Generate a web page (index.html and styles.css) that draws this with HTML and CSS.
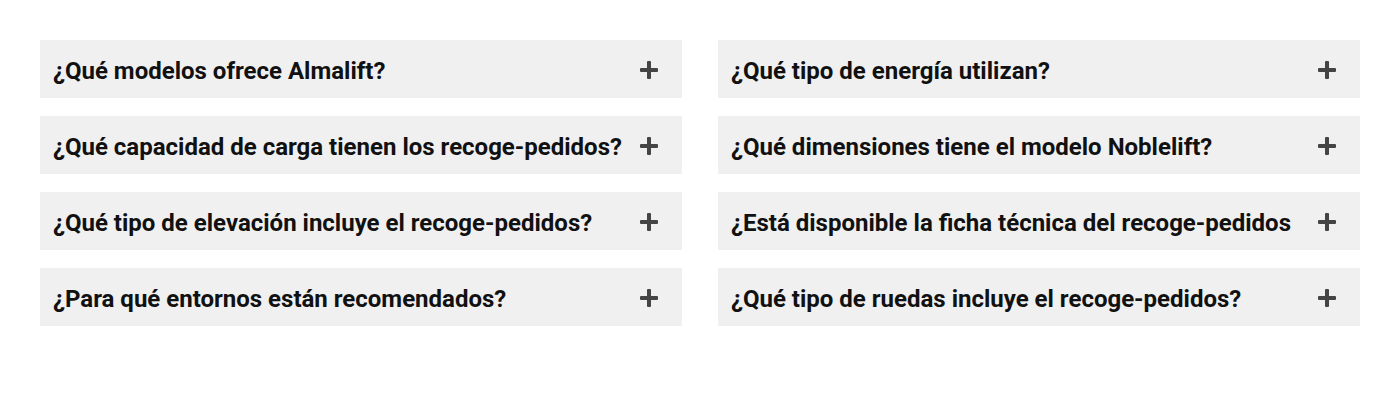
FILE: index.html
```html
<!DOCTYPE html>
<html lang="es">
<head>
<meta charset="utf-8">
<title>Preguntas frecuentes</title>
<link rel="stylesheet" href="styles.css">
</head>
<body>
<div class="faq">
  <div class="item"><span class="q">¿Qué modelos ofrece Almalift?</span><span class="plus"></span></div>
  <div class="item"><span class="q">¿Qué tipo de energía utilizan?</span><span class="plus"></span></div>
  <div class="item"><span class="q">¿Qué capacidad de carga tienen los recoge-pedidos?</span><span class="plus"></span></div>
  <div class="item"><span class="q">¿Qué dimensiones tiene el modelo Noblelift?</span><span class="plus"></span></div>
  <div class="item"><span class="q">¿Qué tipo de elevación incluye el recoge-pedidos?</span><span class="plus"></span></div>
  <div class="item"><span class="q">¿Está disponible la ficha técnica del recoge-pedidos</span><span class="plus"></span></div>
  <div class="item"><span class="q">¿Para qué entornos están recomendados?</span><span class="plus"></span></div>
  <div class="item"><span class="q">¿Qué tipo de ruedas incluye el recoge-pedidos?</span><span class="plus"></span></div>
</div>
</body>
</html>
```
FILE: styles.css
```css
html, body {
  margin: 0;
  padding: 0;
  background: #fff;
}
body {
  padding: 40px;
  font-family: Roboto, "Liberation Sans", Arial, sans-serif;
}
.faq {
  display: grid;
  grid-template-columns: minmax(0, 1fr) minmax(0, 1fr);
  column-gap: 36px;
  row-gap: 18px;
}
.item {
  display: flex;
  align-items: center;
  height: 58px;
  background: #f0f0f0;
  padding: 0 24px 0 13px;
  box-sizing: border-box;
}
.q {
  flex: 1;
  min-width: 0;
  overflow: hidden;
  white-space: nowrap;
  font-size: 24px;
  line-height: 28px;
  font-weight: 700;
  color: #111;
  padding-top: 3px;
}
.plus {
  position: relative;
  width: 18px;
  height: 18px;
  margin-left: 18px;
  flex: none;
  margin-top: 2px;
}
.plus::before, .plus::after {
  content: "";
  position: absolute;
  background: #444;
  border-radius: 1px;
}
.plus::before {
  left: 0;
  right: 0;
  top: 7px;
  height: 4px;
}
.plus::after {
  top: 0;
  bottom: 0;
  left: 7px;
  width: 4px;
}
```
